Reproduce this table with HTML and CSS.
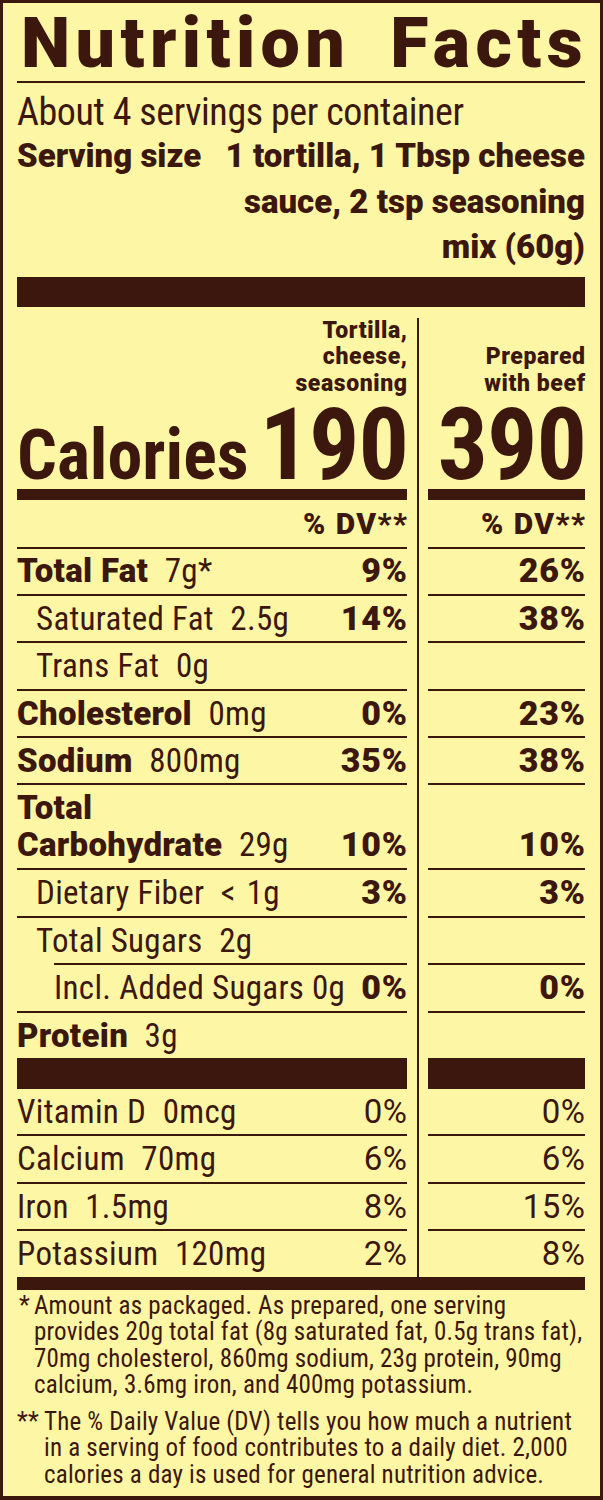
FILE: index.html
```html
<!DOCTYPE html>
<html lang="en">
<head>
<meta charset="utf-8">
<title>Nutrition Facts</title>
<link rel="stylesheet" href="styles.css">
</head>
<body>
<div class="label">
  <h1 class="title"><span>Nutrition</span><span>Facts</span></h1>
  <div class="rule-thin"></div>
  <p class="servings">About 4 servings per container</p>
  <div class="serving-size">
    <span class="ss-label">Serving size</span>
    <span class="ss-value">1 tortilla, 1 Tbsp cheese<br>sauce, 2 tsp seasoning<br>mix (60g)</span>
  </div>
  <div class="bar-thick"></div>

  <div class="table">
    <div class="divider"></div>

    <div class="cell head">Tortilla,<br>cheese,<br>seasoning</div>
    <div class="cell head">Prepared<br>with beef</div>

    <div class="cell cal"><span class="cal-label">Calories</span><span class="cal-num">190</span></div>
    <div class="cell cal"><span class="cal-num">390</span></div>

    <div class="cell bar-mid"></div>
    <div class="cell bar-mid"></div>

    <div class="cell dv">% DV**</div>
    <div class="cell dv">% DV**</div>

    <div class="cell row"><span><b>Total Fat</b><span class="amt">7g*</span></span><b class="pct">9%</b></div>
    <div class="cell row"><b class="pct">26%</b></div>

    <div class="cell row ind1"><span>Saturated Fat<span class="amt">2.5g</span></span><b class="pct">14%</b></div>
    <div class="cell row"><b class="pct">38%</b></div>

    <div class="cell row ind1"><span>Trans Fat<span class="amt">0g</span></span></div>
    <div class="cell row"></div>

    <div class="cell row"><span><b>Cholesterol</b><span class="amt">0mg</span></span><b class="pct">0%</b></div>
    <div class="cell row"><b class="pct">23%</b></div>

    <div class="cell row"><span><b>Sodium</b><span class="amt">800mg</span></span><b class="pct">35%</b></div>
    <div class="cell row"><b class="pct">38%</b></div>

    <div class="cell row two"><span><b>Total<br>Carbohydrate</b><span class="amt">29g</span></span><b class="pct">10%</b></div>
    <div class="cell row two"><b class="pct">10%</b></div>

    <div class="cell row ind1"><span>Dietary Fiber<span class="amt lt">&lt; 1g</span></span><b class="pct">3%</b></div>
    <div class="cell row"><b class="pct">3%</b></div>

    <div class="cell row ind1"><span>Total Sugars<span class="amt">2g</span></span></div>
    <div class="cell row"></div>

    <div class="cell row ind2"><span>Incl. Added Sugars 0g</span><b class="pct">0%</b></div>
    <div class="cell row"><b class="pct">0%</b></div>

    <div class="cell row"><span><b>Protein</b><span class="amt">3g</span></span></div>
    <div class="cell row"></div>

    <div class="cell bar-thick2"></div>
    <div class="cell bar-thick2"></div>

    <div class="cell row vit first"><span>Vitamin D<span class="amt">0mcg</span></span><span class="vpct">0%</span></div>
    <div class="cell row vit first"><span class="vpct">0%</span></div>

    <div class="cell row vit"><span>Calcium<span class="amt">70mg</span></span><span class="vpct">6%</span></div>
    <div class="cell row vit"><span class="vpct">6%</span></div>

    <div class="cell row vit"><span>Iron<span class="amt">1.5mg</span></span><span class="vpct">8%</span></div>
    <div class="cell row vit"><span class="vpct">15%</span></div>

    <div class="cell row vit"><span>Potassium<span class="amt">120mg</span></span><span class="vpct">2%</span></div>
    <div class="cell row vit"><span class="vpct">8%</span></div>
  </div>

  <div class="bar-bottom"></div>

  <div class="notes">
    <p class="note"><span class="mark m1">*</span><span>Amount as packaged. As prepared, one serving<br>provides 20g total fat (8g saturated fat, 0.5g trans fat),<br>70mg cholesterol, 860mg sodium, 23g protein, 90mg<br>calcium, 3.6mg iron, and 400mg potassium.</span></p>
    <p class="note"><span class="mark m2">**</span><span>The % Daily Value (DV) tells you how much a nutrient<br>in a serving of food contributes to a daily diet. 2,000<br>calories a day is used for general nutrition advice.</span></p>
  </div>
</div>
</body>
</html>
```
FILE: styles.css
```css
* { box-sizing: border-box; }

html, body {
  margin: 0;
  padding: 0;
  background: #fdf6a4;
}

.label {
  width: 603px;
  height: 1500px;
  background: #fdf6a4;
  color: #3c170e;
  border-style: solid;
  border-color: #3c170e;
  border-width: 3px 3px 4px 3px;
  padding: 0 15px 0 14px;
  font-family: "Roboto", "Roboto Condensed", sans-serif;
  font-stretch: 75%;
  overflow: hidden;
}

b {
  font-weight: 900;
  font-stretch: 100%;
}

.title {
  margin: 11px -3px 0 0;
  display: flex;
  justify-content: space-between;
  font-weight: 900;
  font-stretch: 100%;
  font-size: 70px;
  line-height: 58px;
  letter-spacing: 5.4px;
  padding: 0 0 0 4px;
}

.rule-thin {
  height: 2px;
  margin-top: 9px;
  background: #3c170e;
}

.servings {
  margin: 8px 0 0;
  font-size: 38px;
  line-height: 42px;
  font-weight: 400;
  letter-spacing: -0.4px;
}

.serving-size {
  display: flex;
  justify-content: space-between;
  font-weight: 900;
  font-stretch: 100%;
  font-size: 33px;
  line-height: 45.5px;
}

.ss-value {
  text-align: right;
}

.bar-thick {
  height: 30px;
  margin-top: 7px;
  background: #3c170e;
}

.table {
  display: grid;
  grid-template-columns: 390px 21px 157px;
  padding-top: 11px;
}

.divider {
  grid-column: 2;
  grid-row: 1 / span 19;
  width: 2px;
  justify-self: center;
  background: #3c170e;
}

.cell:nth-of-type(even) { grid-column: 1; }
.cell:nth-of-type(odd) { grid-column: 3; }

.head {
  align-self: end;
  text-align: right;
  font-weight: 900;
  font-stretch: 100%;
  font-size: 23px;
  line-height: 26.5px;
  letter-spacing: 0.6px;
  margin-right: -0.6px;
  padding-bottom: 7.5px;
}

.cal {
  height: 84px;
  display: flex;
  justify-content: space-between;
  align-items: baseline;
  font-weight: 700;
  font-stretch: 75%;
}

.cal:nth-of-type(odd) { justify-content: flex-end; }

.cal-label {
  font-size: 70px;
  line-height: 70px;
}

.cal-num {
  font-size: 100px;
  line-height: 80px;
  letter-spacing: -1px;
  margin-right: -1px;
}

.bar-mid {
  height: 11px;
  background: #3c170e;
}

.dv {
  height: 47px;
  text-align: right;
  font-weight: 900;
  font-stretch: 100%;
  font-size: 30px;
  line-height: 47px;
  letter-spacing: 1.5px;
  margin-right: -1.5px;
}

.row {
  display: flex;
  justify-content: space-between;
  align-items: flex-end;
  border-top: 2px solid #3c170e;
  font-size: 33px;
  line-height: 45.4px;
  height: 47.4px;
  white-space: nowrap;
  letter-spacing: 0.3px;
}

.row:nth-of-type(odd) { justify-content: flex-end; }

.pct {
  font-size: 34px;
  font-stretch: 100%;
  letter-spacing: 0.8px;
  margin-right: -0.8px;
}

.vpct {
  font-stretch: 100%;
  letter-spacing: 0.5px;
  margin-right: -0.5px;
}

.amt {
  margin-left: 0.5em;
  font-weight: 400;
}

.amt.lt {
  word-spacing: 3px;
}

.ind1 { padding-left: 19px; }

.ind2 {
  margin-left: 37px;
}

.row.two {
  height: 85px;
  line-height: 37px;
  padding-bottom: 5px;
}

.bar-thick2 {
  height: 31px;
  background: #3c170e;
}

.row.vit.first {
  border-top: 0;
  height: 45.4px;
}

.bar-bottom {
  height: 13px;
  background: #3c170e;
}

.notes {
  margin-top: 3px;
  font-size: 25px;
  line-height: 26.5px;
  letter-spacing: 0.2px;
}

.note {
  display: flex;
  margin: 0;
  white-space: nowrap;
}

.note + .note {
  margin-top: 10px;
}

.mark.m1 {
  width: 17px;
  padding-left: 2px;
  flex: none;
}

.mark.m2 {
  width: 27px;
  flex: none;
}
```
